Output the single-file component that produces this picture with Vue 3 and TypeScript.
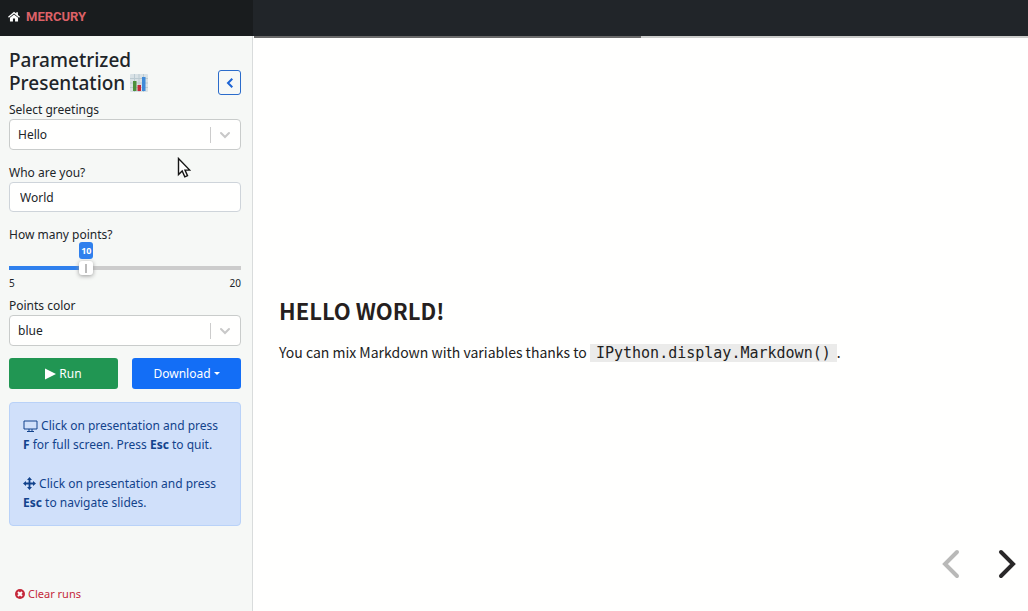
<script setup lang="ts">
import { computed, ref } from 'vue'

const greeting = ref('Hello')
const person = ref('World')
const points = ref(10)
const color = ref('blue')

const min = 5
const max = 20
const fill = computed(() => `${((points.value - min) / (max - min)) * 100}%`)
</script>

<template>
  <div class="app">
    <header class="topbar">
      <a class="brand" href="#">
        <svg class="home" viewBox="0 0 16 14" aria-hidden="true">
          <path d="M8 0.500 0 7.200l1.200 1.400L8 3l6.800 5.600 1.200-1.400L13.200 4.900V1.200h-2.200v1.900z" />
          <path d="M8 4.200 2.600 8.600V13.500h4V9.500h2.800v4h4V8.600z" />
        </svg>
        <span class="brand-name">MERCURY</span>
      </a>
    </header>

    <div class="body">
      <aside class="sidebar">
        <div class="title-row">
          <h1>Parametrized Presentation
            <svg class="chart" viewBox="0 0 18 18" aria-hidden="true">
              <rect width="18" height="18" rx="1" fill="#d9e2e6" />
              <path d="M0 4.500h18M0 9h18M0 13.500h18M4.500 0v18M9 0v18M13.500 0v18" stroke="#bccbd2" stroke-width="1" />
              <rect x="3" y="7" width="3.500" height="10" fill="#4c8f3c" />
              <rect x="7.500" y="11" width="3.500" height="6" fill="#c4283a" />
              <rect x="12" y="3" width="3.500" height="14" fill="#3f8ad8" />
            </svg>
          </h1>
          <button class="collapse" type="button" aria-label="Collapse sidebar">
            <svg viewBox="0 0 8 12" aria-hidden="true"><path d="M6.300 1.700 2 6l4.300 4.300" /></svg>
          </button>
        </div>

        <div class="field">
          <label for="greeting">Select greetings</label>
          <div class="select">
            <select id="greeting" v-model="greeting">
              <option>Hello</option>
              <option>Hi</option>
            </select>
            <svg viewBox="0 0 12 8" aria-hidden="true"><path d="M2 2l4 4 4-4" /></svg>
          </div>
        </div>

        <div class="field">
          <label for="person">Who are you?</label>
          <input id="person" v-model="person" class="text" type="text" />
        </div>

        <div class="field slider-field">
          <label for="points">How many points?</label>
          <div class="slider" :style="{ '--fill': fill }">
            <output class="bubble" for="points">{{ points }}</output>
            <input id="points" v-model.number="points" type="range" :min="min" :max="max" />
          </div>
          <div class="limits"><span>{{ min }}</span><span>{{ max }}</span></div>
        </div>

        <div class="field color-field">
          <label for="color">Points color</label>
          <div class="select">
            <select id="color" v-model="color">
              <option>blue</option>
              <option>red</option>
            </select>
            <svg viewBox="0 0 12 8" aria-hidden="true"><path d="M2 2l4 4 4-4" /></svg>
          </div>
        </div>

        <div class="actions">
          <button class="run" type="button">
            <svg viewBox="0 0 11 12" aria-hidden="true"><path d="M0 0.500v11L11 6z" /></svg>Run
          </button>
          <button class="download" type="button">Download<span class="caret"></span></button>
        </div>

        <div class="hint">
          <p>
            <svg class="screen" viewBox="0 0 15 12" aria-hidden="true">
              <path d="M1 1h13v8H1zM4 11.500h7M6 9v2M9 9v2" />
            </svg>
            Click on presentation and press <b>F</b> for full screen. Press <b>Esc</b> to quit.
          </p>
          <p>
            <svg class="move" viewBox="0 0 13 13" aria-hidden="true">
              <path d="M6.500 0 9 3H7.400v2.600H10V4l3 2.500L10 9V7.400H7.400V10H9l-2.500 3L4 10h1.600V7.400H3V9L0 6.500 3 4v1.600h2.600V3H4z" />
            </svg>
            Click on presentation and press <b>Esc</b> to navigate slides.
          </p>
        </div>

        <button class="clear" type="button">
          <svg viewBox="0 0 10 10" aria-hidden="true">
            <circle cx="5" cy="5" r="5" /><path d="M3 3l4 4M7 3l-4 4" />
          </svg>Clear runs
        </button>
      </aside>

      <main class="deck">
        <div class="progress"><span></span></div>
        <section class="slide">
          <h2>HELLO WORLD!</h2>
          <p>You can mix Markdown with variables thanks to <code>IPython.display.Markdown()</code>.</p>
        </section>
        <nav class="controls" aria-label="Slides">
          <button type="button" disabled aria-label="Previous slide">
            <svg viewBox="0 0 20 30"><path d="M16 3 4 15l12 12" /></svg>
          </button>
          <button type="button" aria-label="Next slide">
            <svg viewBox="0 0 20 30"><path d="M4 3l12 12L4 27" /></svg>
          </button>
        </nav>
      </main>
    </div>

    <svg class="pointer" viewBox="0 0 14 22" aria-hidden="true">
      <path d="M1.500 1.500v16l3.700-3.500 2.600 5.800 2.700-1.200-2.500-5.500h4.700z" />
    </svg>
  </div>
</template>

<style>
body {
  margin: 0;
}
</style>

<style scoped>
* {
  box-sizing: border-box;
}

.app {
  display: flex;
  flex-direction: column;
  min-height: 100vh;
  background: #fffffe;
  color: #212529;
  font-family: "Noto Sans", "Open Sans", sans-serif;
  font-size: 12px;
}

button,
input,
select {
  font: inherit;
  margin: 0;
}

h1,
h2,
p {
  margin: 0;
}

.topbar {
  display: flex;
  height: 36px;
  background: #212529;
}

.brand {
  display: flex;
  align-items: center;
  gap: 6px;
  width: 253px;
  padding: 0 8px 4px;
  background: #191c1e;
  color: #dc6167;
  text-decoration: none;
}

.home {
  width: 12px;
  height: 11px;
  fill: #fff;
}

.brand-name {
  padding-top: 1px;
  font-family: Roboto, sans-serif;
  font-size: 13px;
  font-weight: 700;
  line-height: 16px;
}

.body {
  display: flex;
  flex: 1;
}

.sidebar {
  display: flex;
  flex-direction: column;
  width: 253px;
  padding: 13px 11px 8px 9px;
  border-right: 1px solid #d9dcdc;
  background: #f6f8f6;
}

.title-row {
  display: flex;
  align-items: flex-end;
  justify-content: space-between;
  margin-bottom: 5px;
}

h1 {
  width: 160px;
  font-size: 19px;
  font-weight: 500;
  line-height: 23px;
}

.chart {
  width: 18px;
  height: 18px;
  vertical-align: -2px;
}

.collapse {
  display: flex;
  align-items: center;
  justify-content: center;
  width: 23px;
  height: 25px;
  padding: 0;
  border: 1px solid #2b6ccb;
  border-radius: 3px;
  background: transparent;
}

.collapse svg {
  width: 8px;
  height: 12px;
  fill: none;
  stroke: #1c64d4;
  stroke-width: 2;
}

.field {
  display: flex;
  flex-direction: column;
  margin-bottom: 13px;
}

label {
  line-height: 19px;
}

.select {
  display: grid;
  align-items: center;
}

.select > * {
  grid-area: 1 / 1;
}

.select select {
  appearance: none;
  width: 100%;
  height: 31px;
  padding: 0 40px 0 8px;
  border: 1px solid #c9cccb;
  border-radius: 4px;
  background: linear-gradient(#ccc, #ccc) right 29px center / 1px 16px no-repeat #fffffe;
  color: #212529;
}

.select svg {
  justify-self: end;
  width: 12px;
  height: 8px;
  margin-right: 10px;
  fill: none;
  stroke: #c8c8c8;
  stroke-width: 2;
  stroke-linecap: round;
  pointer-events: none;
}

.text {
  height: 30px;
  padding: 0 10px;
  border: 1px solid #ced4da;
  border-radius: 4px;
  background: #fffffe;
  color: #212529;
}

.slider-field {
  margin-bottom: 5px;
}

.slider {
  position: relative;
  height: 14px;
  margin-top: 17px;
  background:
    linear-gradient(#2f80ed, #2f80ed) left center / var(--fill) 4px no-repeat,
    linear-gradient(#ccc, #ccc) left center / 100% 4px no-repeat;
}

.slider input {
  display: block;
  appearance: none;
  width: calc(100% + 14px);
  height: 14px;
  margin: 0 -7px;
  background: transparent;
}

.slider input::-webkit-slider-thumb {
  appearance: none;
  width: 14px;
  height: 14px;
  border-radius: 3px;
  background: linear-gradient(#bbb, #bbb) center / 2px 9px no-repeat #fff;
  box-shadow: 0 1px 4px #999;
}

.bubble {
  position: absolute;
  bottom: 16px;
  left: var(--fill);
  width: 14px;
  border-radius: 3px;
  background: #2f80ed;
  color: #fff;
  font-size: 9px;
  font-weight: 700;
  line-height: 17px;
  text-align: center;
  transform: translateX(-50%);
}

.limits {
  display: flex;
  justify-content: space-between;
  margin-top: 1px;
  font-size: 10px;
  line-height: 15px;
}

.color-field {
  margin-bottom: 12px;
}

.actions {
  display: grid;
  grid-template-columns: 1fr 1fr;
  gap: 14px;
  margin-bottom: 13px;
}

.actions button {
  display: flex;
  align-items: center;
  justify-content: center;
  gap: 3px;
  height: 31px;
  padding: 0;
  border: 0;
  border-radius: 3px;
  color: #fff;
}

.run {
  background: #219653;
}

.run svg {
  width: 11px;
  height: 12px;
  fill: #fff;
}

.download {
  background: #136ef6;
}

.caret {
  border-top: 3px solid #fff;
  border-right: 3px solid transparent;
  border-left: 3px solid transparent;
}

.hint {
  display: flex;
  flex-direction: column;
  gap: 20px;
  padding: 13px 16px 13px 13px;
  border: 1px solid #b9d2f8;
  border-radius: 4px;
  background: #d0e0fa;
  color: #12438c;
  line-height: 19px;
}

.screen {
  width: 15px;
  height: 12px;
  fill: none;
  stroke: currentColor;
  vertical-align: -2px;
}

.move {
  width: 13px;
  height: 13px;
  fill: currentColor;
  vertical-align: -2px;
}

.clear {
  display: flex;
  align-items: center;
  align-self: flex-start;
  gap: 3px;
  margin-top: auto;
  padding: 0 6px;
  border: 0;
  background: none;
  color: #c4283a;
  font-size: 11px;
  line-height: 18px;
}

.clear svg {
  width: 10px;
  height: 10px;
  fill: #c4283a;
}

.clear path {
  stroke: #fff;
  stroke-width: 2;
}

.deck {
  position: relative;
  display: flex;
  flex: 1;
  flex-direction: column;
  padding-left: 1px;
}

.progress {
  height: 2px;
  background: #cccdcb;
}

.progress span {
  display: block;
  width: 50%;
  height: 2px;
  background: #6a6a6a;
}

.slide {
  display: flex;
  flex: 1;
  flex-direction: column;
  justify-content: center;
  gap: 15px;
  padding: 9px 25px 0;
  color: #222;
  font-family: "Noto Sans CJK SC", sans-serif;
}

h2 {
  color: #261f20;
  font-size: 22px;
  font-weight: 700;
  line-height: 32px;
}

.slide p {
  font-size: 14px;
  line-height: 22px;
}

code {
  padding: 0 6px;
  background: #ebebea;
  font-family: "DejaVu Sans Mono", monospace;
  font-size: 15px;
}

.controls {
  position: absolute;
  right: 11px;
  bottom: 32px;
  display: flex;
  gap: 36px;
}

.controls button {
  padding: 0;
  border: 0;
  background: none;
  color: #2a2829;
}

.controls button:disabled {
  color: #b9b9b8;
}

.controls svg {
  display: block;
  width: 20px;
  height: 30px;
  fill: none;
  stroke: currentColor;
  stroke-width: 4;
  stroke-linecap: round;
}

.pointer {
  position: absolute;
  top: 157px;
  left: 177px;
  width: 14px;
  height: 22px;
  fill: #fff;
  stroke: #161616;
  stroke-width: 1.4;
  pointer-events: none;
}
</style>
